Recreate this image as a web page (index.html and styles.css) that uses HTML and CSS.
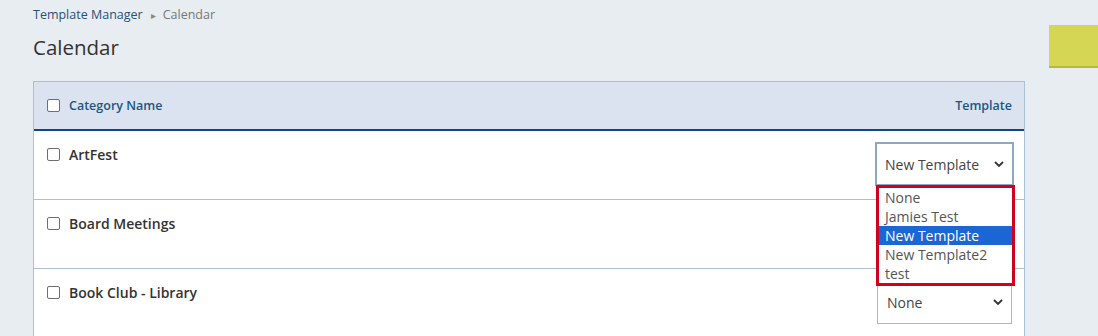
FILE: index.html
```html
<!DOCTYPE html>
<html>
<head>
<meta charset="utf-8">
<link rel="stylesheet" href="styles.css">
</head>
<body>
<div class="page">
  <main class="main">
    <nav class="crumbs"><a class="crumb-link">Template Manager</a><span class="crumb-sep">&#9656;</span><span class="crumb-current">Calendar</span></nav>
    <h1 class="title">Calendar</h1>
    <div class="table">
      <div class="row head">
        <label class="name-cell"><span class="cb"></span><span class="head-label">Category Name</span></label>
        <div class="tpl-cell head-label">Template</div>
      </div>
      <div class="row">
        <label class="name-cell"><span class="cb"></span><span class="name">ArtFest</span></label>
        <div class="tpl-cell">
          <div class="select focused"><span>New Template</span><svg class="chev" viewBox="0 0 10 6" width="10" height="6"><path d="M1 1l4 4 4-4" fill="none" stroke="#333" stroke-width="1.8"/></svg></div>
          <ul class="dropdown">
            <li>None</li>
            <li>Jamies Test</li>
            <li class="sel">New Template</li>
            <li>New Template2</li>
            <li>test</li>
          </ul>
        </div>
      </div>
      <div class="row">
        <label class="name-cell"><span class="cb"></span><span class="name">Board Meetings</span></label>
        <div class="tpl-cell"></div>
      </div>
      <div class="row">
        <label class="name-cell"><span class="cb"></span><span class="name">Book Club - Library</span></label>
        <div class="tpl-cell">
          <div class="select"><span>None</span><svg class="chev" viewBox="0 0 10 6" width="10" height="6"><path d="M1 1l4 4 4-4" fill="none" stroke="#333" stroke-width="1.8"/></svg></div>
        </div>
      </div>
    </div>
  </main>
  <div class="side-btn"></div>
</div>
</body>
</html>
```
FILE: styles.css
```css
html, body {
  margin: 0;
  padding: 0;
  background: #e8edf2;
  font-family: "Open Sans", "Lato", sans-serif;
  color: #333;
  overflow: hidden;
}
.page {
  display: flex;
  align-items: flex-start;
  height: 336px;
}
.main {
  width: 992px;
  margin-left: 33px;
  flex: none;
}
.crumbs {
  font-size: 12.5px;
  line-height: 16px;
  padding-top: 7px;
  display: flex;
  align-items: center;
}
.crumb-link { color: #2b5078; }
.crumb-sep { color: #888; font-size: 10px; margin: 0 7px 0 8px; }
.crumb-current { color: #777; }
.title {
  font-size: 20.5px;
  font-weight: 400;
  margin: 12px 0 0 0;
  line-height: 24px;
  color: #333;
}
.table {
  margin-top: 22px;
  border: 1px solid #aebfd3;
  border-bottom: none;
  background: #fff;
}
.row {
  display: flex;
  justify-content: space-between;
  height: 68px;
  border-bottom: 1px solid #aebfd3;
  box-sizing: content-box;
}
.row.head {
  height: 47px;
  background: #dae3ef;
  border-bottom: 2px solid #0e4b7d;
  align-items: center;
}
.name-cell {
  display: flex;
  align-items: center;
  padding-left: 13px;
  height: 17px;
}
.row:not(.head) .name-cell { margin-top: 15px; }
.cb {
  width: 11px;
  height: 11px;
  border: 1px solid #6f6f6f;
  border-radius: 2px;
  background: #fff;
  margin-right: 9px;
  flex: none;
}
.head-label {
  font-size: 12.5px;
  font-weight: 600;
  color: #1f5582;
}
.tpl-cell {
  padding-right: 12px;
  position: relative;
}
.name {
  font-size: 14px;
  font-weight: 600;
  color: #333;
}
.select {
  margin-top: 11px;
  width: 135px;
  height: 44px;
  box-sizing: border-box;
  border: 1px solid #a9b8c9;
  background: #fff;
  display: flex;
  align-items: center;
  justify-content: space-between;
  padding: 0 8px 0 9px;
  font-size: 14px;
  color: #444;
}
.select.focused {
  border: 2px solid #8ea7c5;
  width: 139px;
  margin-right: -2px;
  padding-left: 8px;
}
.dropdown {
  position: absolute;
  top: 54px;
  right: 9px;
  width: 133px;
  margin: 0;
  padding: 0;
  list-style: none;
  border: 3px solid #d0021b;
  background: #fff;
  font-size: 14px;
  z-index: 5;
}
.dropdown li {
  height: 19px;
  line-height: 19px;
  padding-left: 6px;
  color: #555;
}
.dropdown li.sel {
  background: #1a66d5;
  color: #fff;
}
.side-btn {
  margin-left: 24px;
  margin-top: 25px;
  width: 60px;
  height: 41px;
  background: #d5d653;
  border-bottom: 2px solid #b7b83c;
  flex: none;
}
```
